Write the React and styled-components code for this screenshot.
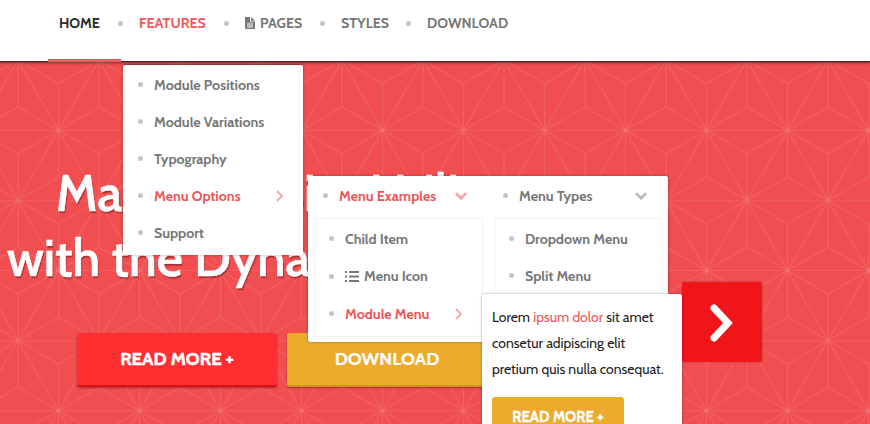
import React from 'react';
import styled, { createGlobalStyle, css } from 'styled-components';

const GlobalStyle = createGlobalStyle`
  *, *::before, *::after { box-sizing: border-box; }
  body {
    margin: 0;
    overflow: hidden;
    background: #f04e50;
    font-family: Cabin, Lato, sans-serif;
    color: #777;
  }
`;

const Page = styled.div`
  position: relative;
  width: 870px;
  height: 424px;
  overflow: hidden;
  display: flex;
  flex-direction: column;
`;

const Header = styled.header`
  flex: none;
  height: 61px;
  background: #fff;
  position: relative;
  z-index: 1;
  box-shadow: 0 1px 1px rgba(30, 30, 35, 0.7), 0 2px 3px rgba(0, 0, 0, 0.4);
`;

const Nav = styled.nav`
  display: flex;
  height: 62px;
  padding-left: 48px;
`;

const NavItem = styled.a`
  display: flex;
  align-items: flex-start;
  width: ${(p) => p.$width}px;
  padding: 13px 0 0 ${(p) => p.$pad ?? 10}px;
  font-size: 14.2px;
  font-weight: 700;
  line-height: 20px;
  white-space: nowrap;
  color: ${(p) => p.$color || '#777'};
  ${(p) => p.$current && css`border-bottom: 3px solid #f2595c;`}
`;

const NavDot = styled.i`
  flex: none;
  width: 5px;
  height: 5px;
  margin: 21px 6px 0 ${(p) => p.$before || 0}px;
  border-radius: 50%;
  background: #c4c4c4;
`;

const FileGlyph = styled.svg`
  width: 10px;
  height: 12px;
  margin: 4px 5px 0 0;
  fill: #777;
`;

const Hero = styled.main`
  position: relative;
  flex: 1;
  display: flex;
  flex-direction: column;
`;

const Pattern = styled.svg`
  position: absolute;
  inset: 0;
  width: 100%;
  height: 100%;
`;

const Title = styled.h1`
  position: relative;
  margin: 100px 0 0;
  font-size: 50.8px;
  font-weight: 500;
  line-height: 65px;
  white-space: nowrap;
  color: #fff;
  -webkit-text-stroke: 0.6px #fff;
  text-shadow: 1px 2px 1px rgba(60, 0, 0, 0.4);
`;

const TitleLine = styled.span`
  display: block;
  padding-left: ${(p) => p.$indent}px;
`;

const Actions = styled.div`
  position: relative;
  display: flex;
  gap: 10px;
  margin: 42px 0 0 77px;
`;

const Action = styled.button`
  width: 200px;
  height: 54px;
  padding: 0 0 2px;
  border: 0;
  border-bottom: 2px solid ${(p) => p.$edge};
  border-radius: 3px;
  background: ${(p) => p.$bg};
  box-shadow: 0 1px 2px rgba(80, 0, 0, 0.45);
  color: #fff;
  font: 700 18.3px Cabin, Lato, sans-serif;
  -webkit-text-stroke: ${(p) => (p.$heavy ? 0.5 : 0.2)}px #fff;
`;

const panel = css`
  position: absolute;
  background: #fff;
  border-radius: 2px;
  box-shadow: 0 0 3px rgba(0, 0, 0, 0.35);
`;

const Dropdown = styled.ul`
  ${panel}
  z-index: 2;
  left: 123px;
  top: 65px;
  width: 180px;
  height: 190px;
  margin: 0;
  padding: 1px 0 0;
  box-shadow: 0 0 3px rgba(0, 0, 0, 0.35), 0 -2px 1px -1px rgba(60, 30, 50, 0.3);
`;

const MegaMenu = styled.div`
  ${panel}
  z-index: 3;
  left: 308px;
  top: 176px;
  width: 360px;
  height: 166px;
  display: grid;
  grid-template-columns: 180px 180px;
`;

const Column = styled.section`
  display: flex;
  flex-direction: column;
  padding: 1px 6px 0;
`;

const SubList = styled.ul`
  width: 169px;
  height: 119px;
  margin: 4px 0 0;
  padding: 1px 0 0;
  border: 1px solid #f4f4f4;
`;

const MenuItem = styled.li`
  display: flex;
  align-items: center;
  height: ${(p) => p.$height || 37}px;
  padding: 0 ${(p) => p.$right ?? 20}px 0 ${(p) => p.$left ?? 15}px;
  list-style: none;
  font-size: 14.2px;
  font-weight: 700;
  white-space: nowrap;
  color: ${(p) => (p.$active ? '#ef5558' : '#777')};

  &::before {
    content: '';
    width: 5px;
    height: 5px;
    margin-right: 11px;
    border-radius: 50%;
    background: #c4c4c4;
  }
`;

const Chevron = styled.svg`
  width: ${(p) => p.$w}px;
  height: ${(p) => p.$h}px;
  margin-left: auto;
  fill: none;
  stroke: ${(p) => p.$color};
  stroke-width: ${(p) => p.$stroke};
`;

const ListGlyph = styled.svg`
  width: 14px;
  height: 11px;
  margin-right: 5px;
  fill: #777;
`;

const ModulePanel = styled.aside`
  ${panel}
  z-index: 4;
  left: 482px;
  top: 294px;
  width: 200px;
  height: 160px;
  padding: 10px 10px 0;
`;

const Copy = styled.p`
  margin: 0 0 15px;
  font-size: 13.95px;
  line-height: 26px;
  white-space: nowrap;
  color: #222;
`;

const Highlight = styled.span`
  color: #ef5558;
`;

const ModuleButton = styled.button`
  width: 132px;
  height: 40px;
  border: 0;
  border-radius: 3px;
  background: #edab2e;
  color: #fff;
  font: 700 14.7px Cabin, Lato, sans-serif;
  -webkit-text-stroke: 0.4px #fff;
  padding: 0;
`;

const NextSlide = styled.button`
  position: absolute;
  z-index: 3;
  left: 682px;
  top: 282px;
  width: 80px;
  height: 80px;
  display: grid;
  place-items: center;
  padding: 2px 2px 0 0;
  border: 0;
  border-radius: 3px;
  background: #ef1518;
  box-shadow: 0 0 2px rgba(100, 0, 0, 0.4);
`;

const NextGlyph = styled.svg`
  width: 26px;
  height: 40px;
  fill: none;
  stroke: #fff;
  stroke-width: 7;
  stroke-linecap: round;
`;

function StarPattern() {
  return (
    <Pattern>
      <defs>
        <pattern id="stars" width="81" height="140.2" x="18" y="-0.8" patternUnits="userSpaceOnUse">
          <g stroke="#fff" strokeOpacity=".1" strokeWidth="1.2" fill="none">
            <path d="M0 70.1H81M0 .4H81M0 0L81 140.2M81 0L0 140.2" />
            <path d="M0 0V46.7L40.5 70.1L81 46.7V0M0 0L40.5 23.4L81 0M40.5 23.4V70.1" />
            <path d="M0 140.2V93.5L40.5 70.1L81 93.5V140.2M0 140.2L40.5 116.8L81 140.2M40.5 116.8V70.1" />
          </g>
        </pattern>
      </defs>
      <rect width="100%" height="100%" fill="url(#stars)" />
    </Pattern>
  );
}

const ChevronRight = ({ color }) => (
  <Chevron $w={7} $h={12} $color={color} $stroke={1.8} viewBox="0 0 7 12">
    <path d="M1 1L6 6L1 11" />
  </Chevron>
);

const ChevronDown = ({ color }) => (
  <Chevron $w={12} $h={8} $color={color} $stroke={2.8} viewBox="0 0 12 8">
    <path d="M1 1.3L6 6.2L11 1.3" />
  </Chevron>
);

export default function App() {
  return (
    <Page>
      <GlobalStyle />
      <Header>
        <Nav>
          <NavItem $width={73} $pad={11} $color="#2a2a2a" $current>HOME</NavItem>
          <NavDot $before={-3} />
          <NavItem $width={95} $color="#f2595c">FEATURES</NavItem>
          <NavDot />
          <NavItem $width={85}>
            <FileGlyph viewBox="0 0 10 12">
              <path fillRule="evenodd" d="M0 0H5V4.6H10V12H0ZM6 0L10 3.7H6ZM2 5.7V6.6H8V5.7ZM2 7.6V8.5H8V7.6ZM2 9.5V10.4H8V9.5Z" />
            </FileGlyph>
            PAGES
          </NavItem>
          <NavDot />
          <NavItem $width={75}>STYLES</NavItem>
          <NavDot />
          <NavItem $width={100}>DOWNLOAD</NavItem>
        </Nav>
      </Header>

      <Hero>
        <StarPattern />
        <Title>
          <TitleLine $indent={56}>Maximize Site Utility</TitleLine>
          <TitleLine $indent={7}>with the Dynamic Menu</TitleLine>
        </Title>
        <Actions>
          <Action $bg="#ff2f31" $edge="#dc1316" $heavy>READ MORE +</Action>
          <Action $bg="#edab2e" $edge="#d3921c">DOWNLOAD</Action>
        </Actions>
      </Hero>

      <Dropdown>
        <MenuItem>Module Positions</MenuItem>
        <MenuItem>Module Variations</MenuItem>
        <MenuItem>Typography</MenuItem>
        <MenuItem $active>Menu Options<ChevronRight color="#f6a5a7" /></MenuItem>
        <MenuItem>Support</MenuItem>
      </Dropdown>

      <MegaMenu>
        <Column>
          <MenuItem as="div" $active $left={9} $right={15}>Menu Examples<ChevronDown color="#f6a5a7" /></MenuItem>
          <SubList>
            <MenuItem $left={14}>Child Item</MenuItem>
            <MenuItem $left={14} $height={38}>
              <ListGlyph viewBox="0 0 14 11">
                <path d="M0 0H2V2H0ZM4 0H14V2H4ZM0 4.5H2V6.5H0ZM4 4.5H14V6.5H4ZM0 9H2V11H0ZM4 9H14V11H4Z" />
              </ListGlyph>
              Menu Icon
            </MenuItem>
            <MenuItem $active $left={14}>Module Menu<ChevronRight color="#f6a5a7" /></MenuItem>
          </SubList>
        </Column>
        <Column>
          <MenuItem as="div" $left={9} $right={15}>Menu Types<ChevronDown color="#bbb" /></MenuItem>
          <SubList>
            <MenuItem $left={14}>Dropdown Menu</MenuItem>
            <MenuItem $left={14}>Split Menu</MenuItem>
          </SubList>
        </Column>
      </MegaMenu>

      <NextSlide aria-label="Next">
        <NextGlyph viewBox="0 0 26 40"><path d="M6 5L20 20L6 35" /></NextGlyph>
      </NextSlide>

      <ModulePanel>
        <Copy>
          Lorem <Highlight>ipsum dolor</Highlight> sit amet<br />
          consetur adipiscing elit<br />
          pretium quis nulla consequat.
        </Copy>
        <ModuleButton>READ MORE +</ModuleButton>
      </ModulePanel>
    </Page>
  );
}
